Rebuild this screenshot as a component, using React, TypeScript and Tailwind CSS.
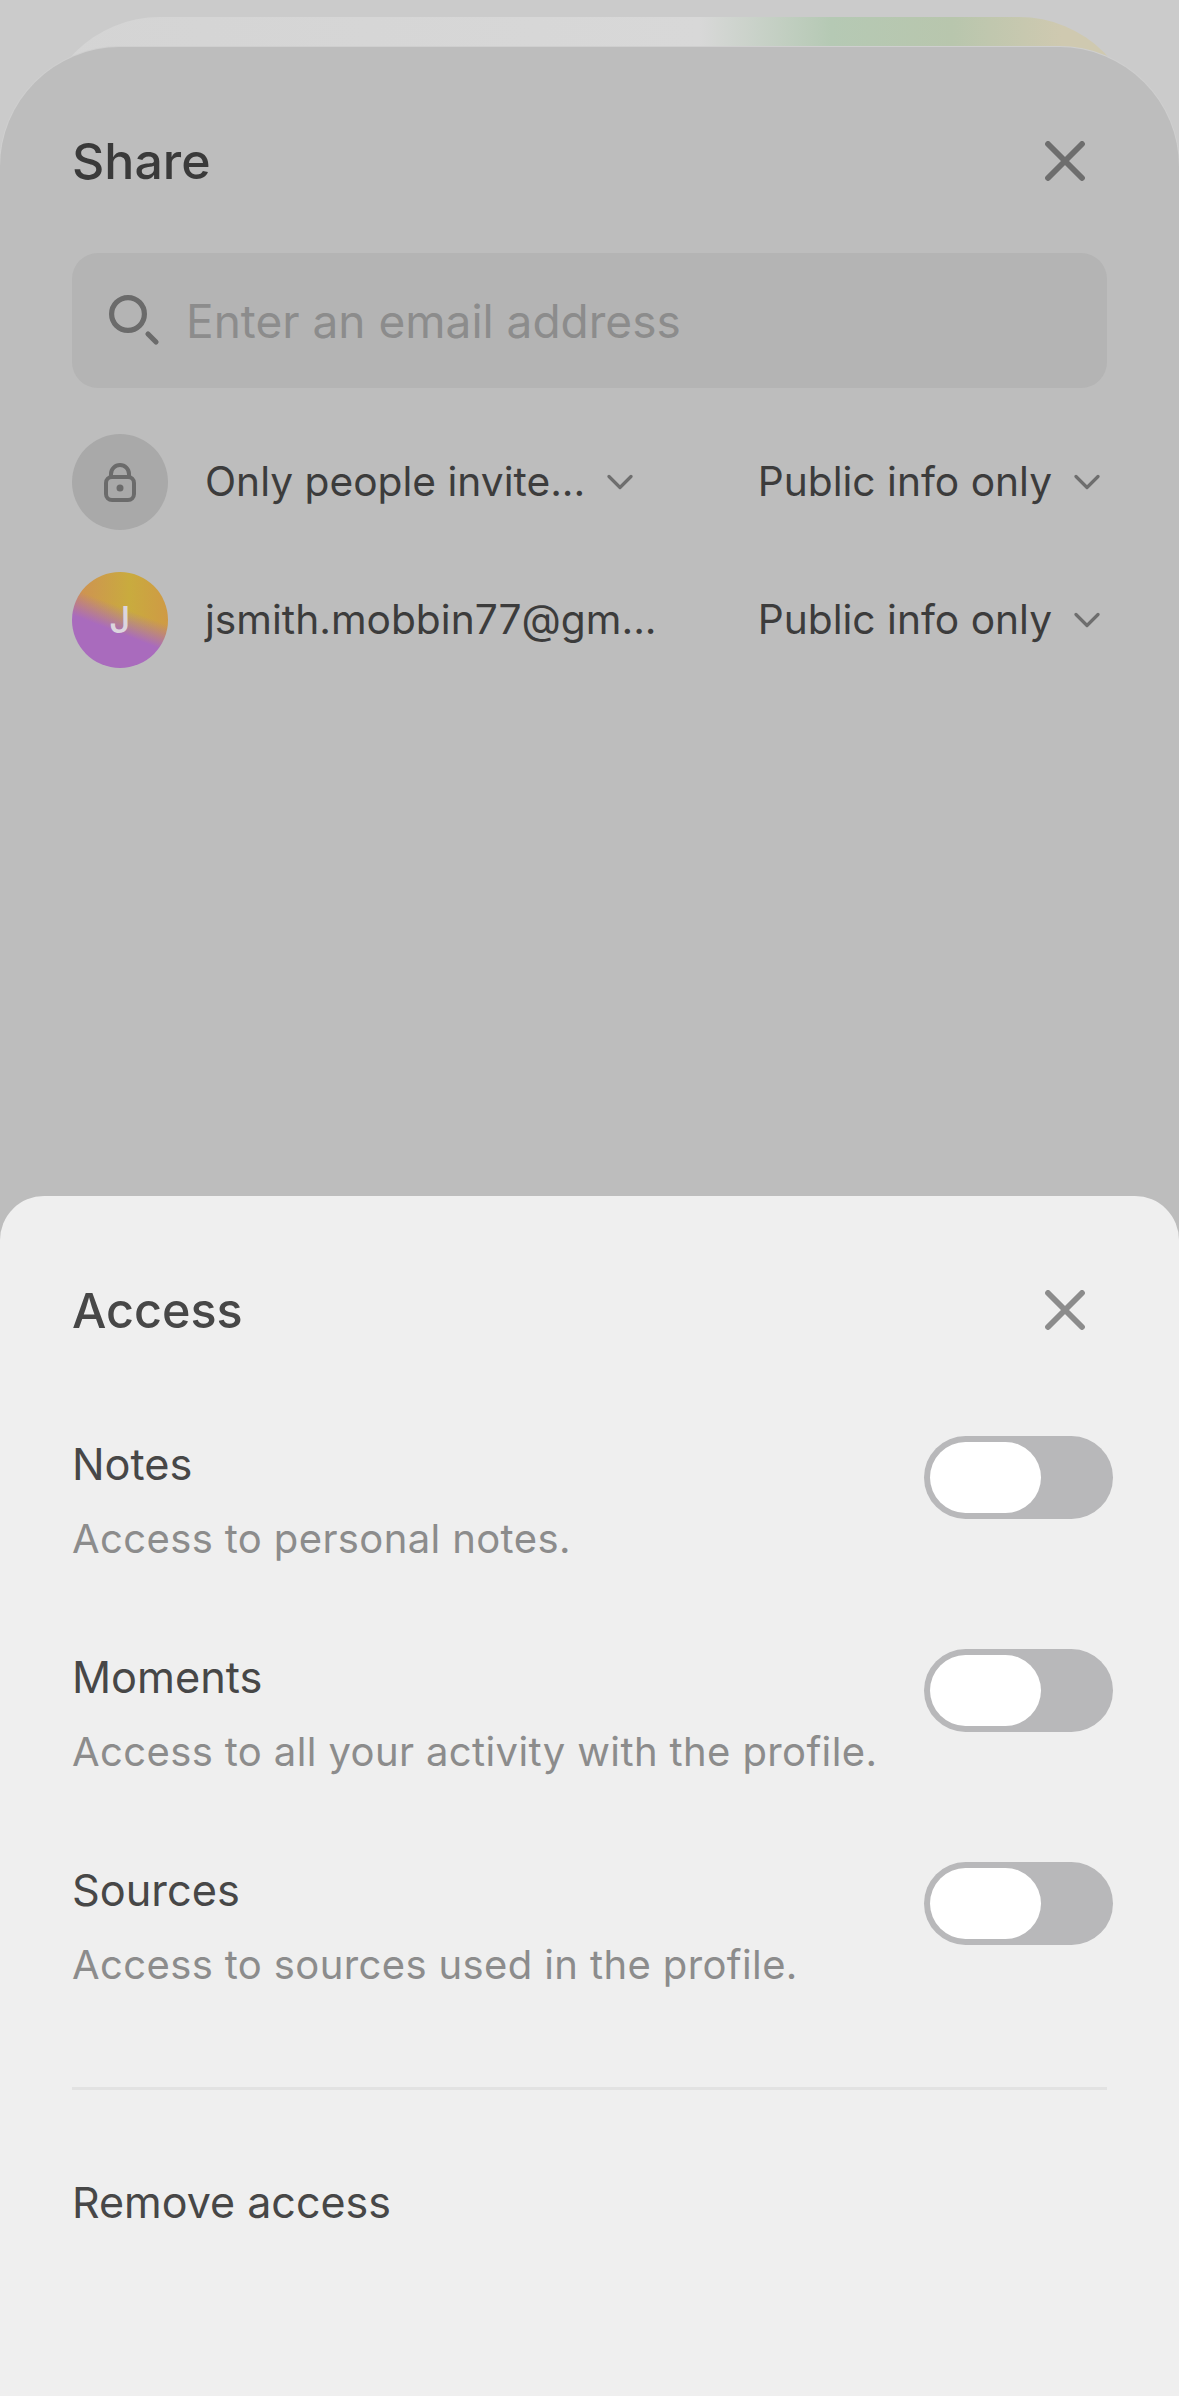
function Chevron() {
  return (
    <svg className="w-[26px] h-[16px] shrink-0" viewBox="0 0 26 16" fill="none" stroke="#6e6e6e" strokeWidth={3.2} strokeLinecap="round" strokeLinejoin="round">
      <path d="M2 2.5l11 11 11-11" />
    </svg>
  )
}

function CloseIcon({ className }: { className: string }) {
  return (
    <svg className={`w-[40px] h-[40px] mr-[22px] ${className}`} viewBox="0 0 40 40" fill="none" stroke="currentColor" strokeWidth={5.8} strokeLinecap="round">
      <path d="M3 3l34 34M37 3L3 37" />
    </svg>
  )
}

function SearchIcon() {
  return (
    <svg className="w-[52px] h-[52px] shrink-0" viewBox="0 0 52 52" fill="none" stroke="#6b6b6b" strokeWidth={5.2} strokeLinecap="round">
      <circle cx="19" cy="19" r="16.4" />
      <path d="M39 39l8 8" />
    </svg>
  )
}

function LockIcon() {
  return (
    <svg className="w-[32px] h-[39px]" viewBox="0 0 32 39" fill="none" stroke="#6b6b6b" strokeWidth={4}>
      <path d="M7 14v-3a9 9 0 0 1 18 0v3" />
      <rect x="2" y="14" width="28" height="23" rx="6" />
      <circle cx="16" cy="25" r="3.5" fill="#6b6b6b" stroke="none" />
    </svg>
  )
}

function PermissionMenu() {
  return (
    <div className="flex items-center gap-[22px] mr-[7px]">
      <span className="text-[40.7px] text-[#3c3c3c]">Public info only</span>
      <Chevron />
    </div>
  )
}

function AccessRow({ title, desc }: { title: string; desc: string }) {
  return (
    <div className="flex justify-between h-[213px]">
      <div>
        <div className="text-[43.3px] leading-[50px] text-[#474747]">{title}</div>
        <div className="mt-[26px] text-[40px] leading-[48px] tracking-[0.38px] text-[#8c8c8c]">{desc}</div>
      </div>
      <div className="w-[189px] h-[83px] mr-[-6px] mt-[-3px] rounded-full bg-[#b8b8ba] p-[6px] shrink-0">
        <div className="w-[111px] h-[71px] rounded-full bg-white" />
      </div>
    </div>
  )
}

export default function App() {
  return (
    <div className="relative h-[2396px] w-[1179px] overflow-hidden bg-[#cbcbcb] font-[Inter,sans-serif]">
      <div className="absolute left-[40px] right-[40px] top-[17px] h-[200px] rounded-t-[120px] bg-[linear-gradient(90deg,#d4d4d4_0%,#d8d8d8_60%,#b5c9b4_72%,#b8c6ad_83%,#cfc9b0_93%)]" />

      <div className="absolute left-0 right-0 top-[47px] bottom-0 rounded-t-[120px] bg-[#bdbdbd] shadow-[0_0_0_1px_#cfcfcf] px-[72px]">
        <div className="flex items-center justify-between h-[114px] mt-[57px]">
          <h1 className="text-[50px] font-medium text-[#3a3a3a]">Share</h1>
          <CloseIcon className="text-[#6e6e6e]" />
        </div>
        <div className="mt-[35px] flex items-center h-[135px] rounded-[26px] bg-[#b4b4b4] pl-[37px]">
          <SearchIcon />
          <span className="ml-[25px] pt-[2px] text-[46px] text-[#8c8c8c]">Enter an email address</span>
        </div>
        <div className="mt-[46px] flex items-center justify-between h-[96px]">
          <div className="flex items-center">
            <div className="w-[96px] h-[96px] rounded-full bg-[#a9a9a9] flex items-center justify-center">
              <LockIcon />
            </div>
            <span className="ml-[37px] text-[40.7px] text-[#3c3c3c]">Only people invite...</span>
            <span className="ml-[22px]"><Chevron /></span>
          </div>
          <PermissionMenu />
        </div>
        <div className="mt-[42px] flex items-center justify-between h-[96px]">
          <div className="flex items-center">
            <div className="w-[96px] h-[96px] rounded-full bg-[linear-gradient(21deg,#a96bbd_40%,transparent_60%),linear-gradient(90deg,#cf8f55,#c9ab3e_60%,#cf9a45)] flex items-center justify-center text-[37px] font-medium text-[#dcd5de]">J</div>
            <span className="ml-[37px] text-[40.7px] text-[#3c3c3c]">jsmith.mobbin77@gm...</span>
          </div>
          <PermissionMenu />
        </div>
      </div>

      <div className="absolute left-0 right-0 top-[1196px] bottom-0 rounded-t-[44px] bg-[#efefef] px-[72px]">
        <div className="flex items-center justify-between h-[114px] mt-[57px]">
          <h2 className="pt-[2px] text-[48.5px] font-medium text-[#474747]">Access</h2>
          <CloseIcon className="text-[#8c8c8c]" />
        </div>
        <div className="mt-[72px]">
          <AccessRow title="Notes" desc="Access to personal notes." />
          <AccessRow title="Moments" desc="Access to all your activity with the profile." />
          <AccessRow title="Sources" desc="Access to sources used in the profile." />
        </div>
        <div className="mt-[9px] h-[3px] bg-[#e2e2e2]" />
        <div className="mt-[80px] text-[43px] text-[#474747]">Remove access</div>
      </div>
    </div>
  )
}
